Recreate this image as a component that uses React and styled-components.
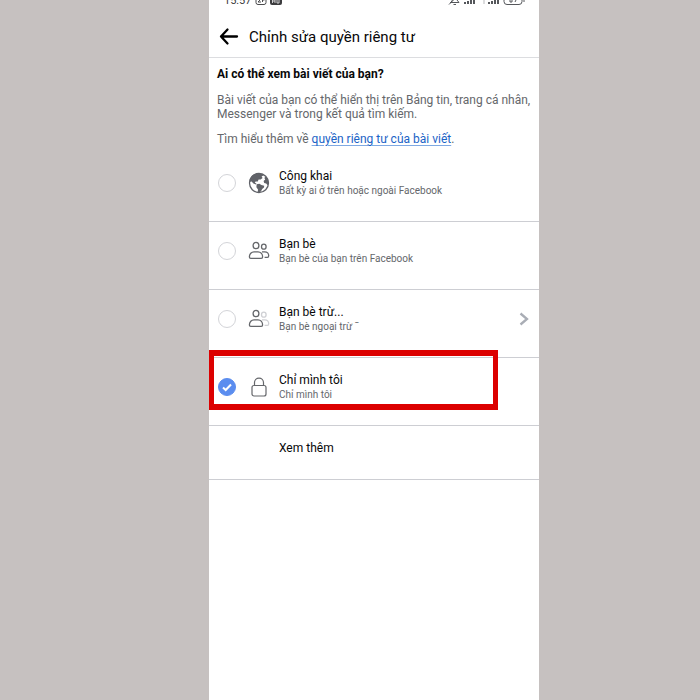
import React, { useState } from "react";
import styled, { createGlobalStyle } from "styled-components";

const GlobalStyle = createGlobalStyle`
  * { box-sizing: border-box; }
  body {
    margin: 0;
    background: #c6c1c0;
    font-family: Roboto, "Noto Sans", sans-serif;
    color: #080809;
  }
`;

const Page = styled.div`
  display: grid;
  grid-template-columns: 209fr 330fr 161fr;
  min-height: 100vh;
`;

const Screen = styled.main`
  grid-column: 2;
  background: #fff;
  min-width: 0;
`;

const StatusBar = styled.div`
  display: flex;
  align-items: flex-end;
  justify-content: space-between;
  height: 6px;
  padding: 0 13px 0 15px;
  overflow: hidden;
  color: #3c3c3e;
`;

const StatusGroup = styled.div`
  display: flex;
  align-items: flex-end;
  gap: 4px;
`;

const Clock = styled.span`
  font-size: 11px;
  line-height: 10px;
`;

const StatusIcon = styled.svg`
  display: block;
  flex: none;
`;

const Header = styled.header`
  display: flex;
  align-items: center;
  gap: 10px;
  height: 52px;
  padding: 10px 10px 0;
  border-bottom: 1px solid #dcdde0;
`;

const BackButton = styled.button`
  display: flex;
  width: 20px;
  height: 20px;
  padding: 0;
  border: 0;
  background: none;
  color: #000;
`;

const PageTitle = styled.h1`
  margin: 0;
  font-size: 15px;
  line-height: 20px;
  font-weight: 400;
`;

const Intro = styled.section`
  display: flex;
  flex-direction: column;
  gap: 11px;
  padding: 9px 8px 8px;
  color: #65676b;
`;

const Question = styled.h2`
  margin: 0;
  color: #080809;
  font-size: 12px;
  line-height: 15px;
  font-weight: 700;
`;

const Paragraph = styled.p`
  margin: 0;
  font-size: 12px;
  line-height: 14px;
`;

const PrivacyLink = styled.a`
  color: #1b63c6;
  text-decoration: underline;
  text-decoration-color: #7fa9e3;
  text-underline-offset: 2px;
`;

const Options = styled.fieldset`
  margin: 0;
  padding: 0;
  border: 0;
  min-width: 0;
`;

const Row = styled.label`
  position: relative;
  display: grid;
  grid-template-columns: 36px 28px 1fr auto;
  align-items: center;
  height: 68px;
  padding: 0 10px 10px 0;
  border-bottom: 1px solid #cdced3;
`;

const RadioCell = styled.span`
  display: grid;
  place-items: center;
  > * { grid-area: 1 / 1; }
`;

const Radio = styled.input`
  appearance: none;
  width: 18px;
  height: 18px;
  margin: 0;
  border: 1px solid #d3d4d8;
  border-radius: 50%;
  background: #fff;
  &:checked {
    border-color: #5b8def;
    background: #5b8def;
  }
`;

const Tick = styled.svg`
  pointer-events: none;
`;

const IconCell = styled.span`
  display: flex;
  justify-content: center;
`;

const OptionText = styled.span`
  display: flex;
  flex-direction: column;
  padding-left: 6px;
`;

const OptionTitle = styled.span`
  font-size: 12px;
  line-height: 16px;
`;

const OptionNote = styled.span`
  color: #65676b;
  font-size: 10px;
  line-height: 14px;
`;

const Highlight = styled.span`
  position: absolute;
  top: -8px;
  left: 0;
  right: 41px;
  height: 60px;
  border: solid #dc0000;
  border-width: 6px 5px;
  pointer-events: none;
`;

const MoreButton = styled.button`
  display: block;
  width: 100%;
  height: 54px;
  padding: 0 10px 10px 70px;
  border: 0;
  border-bottom: 1px solid #cdced3;
  background: none;
  color: inherit;
  font: inherit;
  font-size: 12px;
  line-height: 16px;
  text-align: left;
`;

function GlobeIcon() {
  return (
    <svg width="22" height="22" viewBox="0 0 22 22" aria-hidden="true">
      <circle cx="11" cy="11" r="9.5" fill="#fff" stroke="#606268" strokeWidth="1.3" />
      <path
        fill="#606268"
        d="M1.300 10C1.700 5 5.500 1.300 10.600 1.200L14.600 2 15.200 3.600 13.600 4.600 14.600 6 12.600 7.400 10.600 7.600 9.800 9.400 7.600 9.400 6.800 10.800 8.400 11.600 8 12.600 5.400 11.600 3.600 9.400Z"
      />
      <path
        fill="#606268"
        d="M8.600 12.200L11.400 11.800 13.400 13 16.200 13.800 16 15.600 14.200 17 13 19.200 11.200 20.600 9.800 20.400 10 17.400 8.400 15.200Z"
      />
      <path
        fill="#606268"
        d="M17.400 4.400C19.500 6 20.600 8.200 20.700 11L19.600 13.200 18.200 11.600 16.200 11 15.600 9 17.200 7.600 16.400 6Z"
      />
    </svg>
  );
}

function FriendsIcon({ faded }) {
  const side = faded ? "#cfd0d4" : "#65676b";
  return (
    <svg width="22" height="22" viewBox="0 0 22 22" fill="none" strokeWidth="1.3" aria-hidden="true">
      <g stroke="#65676b">
        <ellipse cx="8" cy="5.500" rx="2.900" ry="3.200" />
        <path d="M2.800 18.400H13.200Q14.600 18.400 14.600 17C14.600 14 12.500 11.800 10 11.800H6C3.500 11.800 1.400 14 1.400 17Q1.400 18.400 2.800 18.400Z" />
      </g>
      <g stroke={side}>
        <ellipse cx="15.800" cy="6.700" rx="2.300" ry="2.500" />
        <path d="M14 11.800H16.800C19.200 11.800 20.700 13.800 20.700 15.700Q20.700 17.400 19.400 17.400H16.600" />
      </g>
    </svg>
  );
}

function LockIcon() {
  return (
    <svg width="22" height="22" viewBox="0 0 22 22" fill="none" stroke="#65676b" strokeWidth="1.2" aria-hidden="true">
      <rect x="4" y="9.500" width="14" height="10.500" rx="2" />
      <path d="M6.500 9.500V6.600a4.500 4.500 0 0 1 9 0v2.900" />
    </svg>
  );
}

function Chevron() {
  return (
    <svg width="10" height="14" viewBox="0 0 10 14" fill="none" stroke="#a9adb5" strokeWidth="2.300" aria-hidden="true">
      <path d="M1.500 1.500L8 7l-6.500 5.500" />
    </svg>
  );
}

const options = [
  { id: "public", title: "Công khai", note: "Bất kỳ ai ở trên hoặc ngoài Facebook", icon: <GlobeIcon /> },
  { id: "friends", title: "Bạn bè", note: "Bạn bè của bạn trên Facebook", icon: <FriendsIcon /> },
  { id: "except", title: "Bạn bè trừ...", note: "Bạn bè ngoại trừ ˉ", icon: <FriendsIcon faded />, more: true },
  { id: "me", title: "Chỉ mình tôi", note: "Chỉ mình tôi", icon: <LockIcon />, highlighted: true },
];

export default function App() {
  const [selected, setSelected] = useState("me");
  return (
    <Page>
      <GlobalStyle />
      <Screen>
        <StatusBar>
          <StatusGroup>
            <Clock>15:57</Clock>
            <StatusIcon width="28" height="12" viewBox="0 0 28 12" aria-hidden="true">
              <rect x="1" y="1" width="10" height="9.500" rx="2" fill="none" stroke="#4b4b4d" />
              <path d="M3 4l3 1-3 3h3M7.500 8V4h2v2h-2" fill="none" stroke="#4b4b4d" />
              <rect x="15" y="1" width="12" height="10" rx="2" fill="#3c3c3e" />
              <path d="M17.500 5v4M17.500 7h2.500M20 5v4M22 6v3h2V6" fill="none" stroke="#d0d0d2" />
            </StatusIcon>
          </StatusGroup>
          <StatusIcon width="78" height="12" viewBox="0 0 78 12" fill="none" stroke="#55575b" aria-hidden="true">
            <path d="M2 8.500h9M3 8.500L5 5V2h4v4l2 2.500M5.500 10.500h2.500M1 10.500l9-9" />
            <path d="M17 10V8M20 10V7M23 10V5M26 10V2M41 10V8M44 10V7M47 10V5M50 10V2" strokeWidth="2" />
            <path d="M36 6v4" stroke="#b9babd" />
            <rect x="56" y="1" width="18" height="9.500" rx="3" />
            <path d="M62 4v4h2V5.500h-2M66 4h3l-2 4M76 4v4" />
          </StatusIcon>
        </StatusBar>
        <Header>
          <BackButton type="button" aria-label="Quay lại">
            <svg width="20" height="20" viewBox="0 0 20 20" fill="none" stroke="currentColor" strokeWidth="2.300" strokeLinecap="round" strokeLinejoin="round" aria-hidden="true">
              <path d="M18 9.500H2M8.500 2.500L2 9.500l6.500 7" />
            </svg>
          </BackButton>
          <PageTitle>Chỉnh sửa quyền riêng tư</PageTitle>
        </Header>
        <Intro>
          <Question>Ai có thể xem bài viết của bạn?</Question>
          <Paragraph>
            Bài viết của bạn có thể hiển thị trên Bảng tin, trang cá nhân, Messenger và trong kết quả tìm kiếm.
          </Paragraph>
          <Paragraph>
            Tìm hiểu thêm về <PrivacyLink href="#privacy">quyền riêng tư của bài viết</PrivacyLink>.
          </Paragraph>
        </Intro>
        <Options aria-label="Ai có thể xem bài viết của bạn?">
          {options.map((option) => (
            <Row key={option.id}>
              <RadioCell>
                <Radio
                  type="radio"
                  name="audience"
                  value={option.id}
                  checked={selected === option.id}
                  onChange={() => setSelected(option.id)}
                />
                {selected === option.id && (
                  <Tick width="12" height="12" viewBox="0 0 12 12" fill="none" stroke="#fff" strokeWidth="2" aria-hidden="true">
                    <path d="M2 6.500L4.700 9 10 3.500" />
                  </Tick>
                )}
              </RadioCell>
              <IconCell>{option.icon}</IconCell>
              <OptionText>
                <OptionTitle>{option.title}</OptionTitle>
                <OptionNote>{option.note}</OptionNote>
              </OptionText>
              {option.more && <Chevron />}
              {option.highlighted && <Highlight />}
            </Row>
          ))}
        </Options>
        <MoreButton type="button">Xem thêm</MoreButton>
      </Screen>
    </Page>
  );
}
